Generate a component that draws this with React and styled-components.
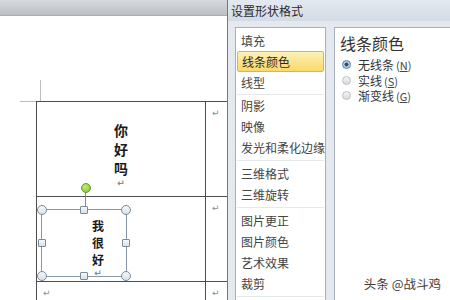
import React from 'react';
import styled, { createGlobalStyle } from 'styled-components';

const GlobalStyle = createGlobalStyle`
    html, body {
        margin: 0;
        padding: 0;
        background: #ffffff;
    }
    body {
        font-family: "Noto Sans CJK SC", "Noto Sans", sans-serif;
    }
`;

const Page = styled.div`
    display: flex;
    width: 450px;
    height: 300px;
    overflow: hidden;
`;

const DocArea = styled.div`
    width: 227px;
    flex-shrink: 0;
    display: flex;
    flex-direction: column;
    background: #ffffff;
`;

const DocTopBar = styled.div`
    height: 15px;
    flex-shrink: 0;
    background: linear-gradient(#d6d9dd, #bcc0c5);
    border-bottom: 1px solid #a9adb2;
`;

const DocCanvas = styled.div`
    padding-top: 64px;
`;

const CropMark = styled.div`
    width: 20px;
    height: 21px;
    margin-left: 20px;
    border-right: 1px solid #bdbdbd;
    border-bottom: 1px solid #bdbdbd;
`;

const Table = styled.div`
    display: grid;
    grid-template-columns: 169px 1fr;
    grid-template-rows: 95px 85px 40px;
    margin-left: 36px;
    margin-top: -1px;
    border-top: 1px solid #4d4d4d;
    border-left: 1px solid #4d4d4d;
`;

const Cell = styled.div`
    border-right: 1px solid #4d4d4d;
    border-bottom: 1px solid #4d4d4d;
    padding: ${props => props.$pad || '0'};
`;

const SideCell = styled.div`
    border-bottom: 1px solid #4d4d4d;
    padding: 6px 0 0 6px;
`;

const ParaMark = styled.span`
    display: block;
    font-family: "DejaVu Sans", sans-serif;
    font-size: 9px;
    line-height: 10px;
    color: #8a8a8a;
`;

const VerticalText = styled.div`
    display: flex;
    flex-direction: column;
    align-items: center;
    font-family: "Noto Sans CJK SC", sans-serif;
    font-weight: 700;
    font-size: ${props => props.$size}px;
    line-height: ${props => props.$line}px;
    color: #1a1a1a;
`;

const Shape = styled.div`
    position: relative;
    width: 86px;
    height: 68px;
    margin: 12px 0 0 4px;
    border: 1px solid #8797a6;
    padding: 7px 0 0 28px;
    box-sizing: border-box;
`;

const Handle = styled.span`
    position: absolute;
    width: ${props => (props.$round ? 8 : 6)}px;
    height: ${props => (props.$round ? 8 : 6)}px;
    border-radius: ${props => (props.$round ? '50%' : '1px')};
    background: linear-gradient(#f4f7fa, #d9e2ea);
    border: 1px solid #7d8b98;
    transform: translate(-50%, -50%);
`;

const RotateStem = styled.span`
    position: absolute;
    left: 43px;
    top: -18px;
    width: 1px;
    height: 18px;
    background: #7d8b98;
`;

const RotateKnob = styled.span`
    position: absolute;
    left: 39px;
    top: -27px;
    width: 8px;
    height: 8px;
    border-radius: 50%;
    background: radial-gradient(circle at 40% 35%, #c4ec7a, #7dbb2e);
    border: 1px solid #5f9a24;
`;

const Dialog = styled.div`
    flex: 1;
    display: flex;
    flex-direction: column;
    background: #e4e9ef;
    border-left: 1px solid #6f7984;
`;

const TitleBar = styled.div`
    height: 21px;
    flex-shrink: 0;
    padding-left: 3px;
    display: flex;
    align-items: center;
    font-size: 12px;
    color: #2a2a2a;
    background: linear-gradient(#e3e9f0, #d3dbe5);
`;

const DialogBody = styled.div`
    flex: 1;
    display: flex;
    gap: 8px;
    padding: 6px 0 0 7px;
`;

const NavList = styled.div`
    width: 89px;
    flex-shrink: 0;
    padding-top: 2px;
    background: #ffffff;
    border: 1px solid #a7afb8;
    border-bottom: none;
`;

const NavItem = styled.div`
    height: 21px;
    box-sizing: border-box;
    padding-left: 5px;
    display: flex;
    align-items: center;
    font-size: 12px;
    color: #444444;
    white-space: nowrap;
    overflow: hidden;
    ${props =>
        props.$active &&
        `
        margin: 0 1px;
        padding-left: 4px;
        border: 1px solid #e2b24a;
        border-radius: 2px;
        background: linear-gradient(#fdf1b8, #fbd968);
        color: #2a2a2a;
    `}
`;

const NavSeparator = styled.div`
    height: 1px;
    margin: ${props => (props.$thin ? '1px 1px 0' : '2px 1px')};
    background: #e6e9ec;
`;

const ContentPanel = styled.div`
    flex: 1;
    display: flex;
    flex-direction: column;
    padding: 5px 0 0 5px;
    background: #ffffff;
    border: 1px solid #a7afb8;
    border-right: none;
    border-bottom: none;
`;

const PanelHeading = styled.div`
    font-size: 16px;
    line-height: 20px;
    color: #333333;
`;

const RadioGroup = styled.div`
    display: flex;
    flex-direction: column;
    margin-top: 4px;
    padding-left: 2px;
`;

const RadioRow = styled.div`
    height: 15.5px;
    display: flex;
    align-items: center;
    gap: 7px;
    font-size: 12px;
    color: #333333;
`;

const RadioDot = styled.span`
    width: 9px;
    height: 9px;
    box-sizing: border-box;
    border-radius: 50%;
    border: 1px solid ${props => (props.$checked ? '#5b7a99' : '#b9bec4')};
    background: ${props =>
        props.$checked
            ? 'radial-gradient(circle, #2f4f6f 0 1.8px, #a9c4dd 2.2px, #e6eef6 100%)'
            : 'linear-gradient(#f3f4f5, #d8dbde)'};
`;

const Key = styled.span`
    margin-left: 2px;
    font-size: 11px;
    color: #444444;
`;

const Watermark = styled.div`
    margin-top: auto;
    margin-bottom: 7px;
    align-self: flex-end;
    margin-right: 9px;
    font-size: 12.5px;
    color: #3c3c3c;
`;

const navGroups = [
    ['填充', '线条颜色', '线型'],
    ['阴影', '映像', '发光和柔化边缘'],
    ['三维格式', '三维旋转'],
    ['图片更正', '图片颜色', '艺术效果', '裁剪'],
];

const radios = [
    { label: '无线条', key: 'N', checked: true },
    { label: '实线', key: 'S' },
    { label: '渐变线', key: 'G' },
];

const handles = [
    { x: 0, y: 0, round: true },
    { x: 50, y: 0 },
    { x: 100, y: 0, round: true },
    { x: 0, y: 50 },
    { x: 100, y: 50 },
    { x: 0, y: 100, round: true },
    { x: 50, y: 100 },
    { x: 100, y: 100, round: true },
];

export default function App() {
    return (
        <>
            <GlobalStyle />
            <Page>
                <DocArea>
                    <DocTopBar />
                    <DocCanvas>
                        <CropMark />
                        <Table>
                            <Cell $pad="19px 0 0 0">
                                <VerticalText $size={14} $line={19}>
                                    <span>你</span>
                                    <span>好</span>
                                    <span>吗</span>
                                    <ParaMark>↵</ParaMark>
                                </VerticalText>
                            </Cell>
                            <SideCell>
                                <ParaMark>↵</ParaMark>
                            </SideCell>
                            <Cell>
                                <Shape>
                                    <RotateStem />
                                    <RotateKnob />
                                    {handles.map((h, i) => (
                                        <Handle
                                            key={i}
                                            $round={h.round}
                                            style={{ left: `${h.x}%`, top: `${h.y}%` }}
                                        />
                                    ))}
                                    <VerticalText $size={12} $line={17}>
                                        <span>我</span>
                                        <span>很</span>
                                        <span>好</span>
                                        <ParaMark>↵</ParaMark>
                                    </VerticalText>
                                </Shape>
                            </Cell>
                            <SideCell>
                                <ParaMark>↵</ParaMark>
                            </SideCell>
                            <Cell $pad="6px 0 0 6px">
                                <ParaMark>↵</ParaMark>
                            </Cell>
                            <SideCell>
                                <ParaMark>↵</ParaMark>
                            </SideCell>
                        </Table>
                    </DocCanvas>
                </DocArea>
                <Dialog>
                    <TitleBar>设置形状格式</TitleBar>
                    <DialogBody>
                        <NavList>
                            {navGroups.map((group, gi) => (
                                <React.Fragment key={gi}>
                                    {gi > 0 && <NavSeparator $thin={gi === 1} />}
                                    {group.map(item => (
                                        <NavItem key={item} $active={item === '线条颜色'}>
                                            {item}
                                        </NavItem>
                                    ))}
                                </React.Fragment>
                            ))}
                            <NavSeparator />
                        </NavList>
                        <ContentPanel>
                            <PanelHeading>线条颜色</PanelHeading>
                            <RadioGroup>
                                {radios.map(r => (
                                    <RadioRow key={r.key}>
                                        <RadioDot $checked={r.checked} />
                                        <span>
                                            {r.label}
                                            <Key>
                                                (<u>{r.key}</u>)
                                            </Key>
                                        </span>
                                    </RadioRow>
                                ))}
                            </RadioGroup>
                            <Watermark>头条 @战斗鸡</Watermark>
                        </ContentPanel>
                    </DialogBody>
                </Dialog>
            </Page>
        </>
    );
}
